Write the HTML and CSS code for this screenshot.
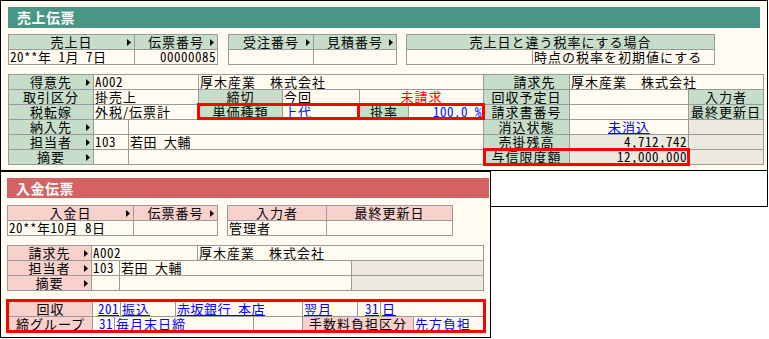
FILE: index.html
```html
<!DOCTYPE html>
<html lang="ja">
<head>
  <meta charset="UTF-8" />
  <title>売上伝票 / 入金伝票</title>
  <link rel="stylesheet" href="styles.css">
</head>
<body>
  <div class="sheet">
    <div class="sales-frame">
      <section class="slip sales">
        <h1 class="slip-title">売上伝票</h1>
        <div class="head-row">
          <div class="grid g-date">
            <div class="c lb ar">売上日</div>
            <div class="c lb ar">伝票番号</div>
            <div class="c num">20**年 1月 7日</div>
            <div class="c num r">00000085</div>
          </div>
          <div class="grid g-order">
            <div class="c lb ar">受注番号</div>
            <div class="c lb ar">見積番号</div>
            <div class="c"></div>
            <div class="c"></div>
          </div>
          <div class="grid g-taxrate">
            <div class="c lb s2">売上日と違う税率にする場合</div>
            <div class="c"></div>
            <div class="c">時点の税率を初期値にする</div>
          </div>
        </div>

        <div class="grid g-main">
          <div class="c lb ar">得意先</div>
          <div class="c s2 num">A002</div>
          <div class="c s4">厚木産業　株式会社</div>
          <div class="c lb shift">請求先</div>
          <div class="c s2">厚木産業　株式会社</div>

          <div class="c lb">取引区分</div>
          <div class="c s2">掛売上</div>
          <div class="c lb">締切</div>
          <div class="c">今回</div>
          <div class="c s2 ctr red">未請求</div>
          <div class="c lb">回収予定日</div>
          <div class="c"></div>
          <div class="c lb">入力者</div>

          <div class="c lb">税転嫁</div>
          <div class="c s2">外税/伝票計</div>
          <div class="c lb">単価種類</div>
          <div class="c"><span class="link">上代</span></div>
          <div class="c lb">掛率</div>
          <div class="c r num blue">100.0 %</div>
          <div class="c lb">請求書番号</div>
          <div class="c"></div>
          <div class="c lb">最終更新日</div>

          <div class="c lb ar">納入先</div>
          <div class="c"></div>
          <div class="c s5"></div>
          <div class="c lb">消込状態</div>
          <div class="c ctr"><span class="link">未消込</span></div>
          <div class="c gr"></div>

          <div class="c lb ar">担当者</div>
          <div class="c num">103</div>
          <div class="c s5 num">若田 大輔</div>
          <div class="c lb">売掛残高</div>
          <div class="c gr r num">4,712,742</div>
          <div class="c gr"></div>

          <div class="c lb ar">摘要</div>
          <div class="c"></div>
          <div class="c s5"></div>
          <div class="c lb">与信限度額</div>
          <div class="c gr r num">12,000,000</div>
          <div class="c gr"></div>
        </div>
      </section>
    </div>

    <div class="mark mark-rate"></div>
    <div class="mark mark-credit"></div>

    <section class="slip receipt">
      <h1 class="slip-title">入金伝票</h1>
      <div class="head-row">
        <div class="grid g-rdate">
          <div class="c lb pk ar">入金日</div>
          <div class="c lb pk ar">伝票番号</div>
          <div class="c num">20**年10月 8日</div>
          <div class="c"></div>
        </div>
        <div class="grid g-rby">
          <div class="c lb pk">入力者</div>
          <div class="c lb pk">最終更新日</div>
          <div class="c">管理者</div>
          <div class="c"></div>
        </div>
      </div>

      <div class="grid g-rmain">
        <div class="c lb pk ar">請求先</div>
        <div class="c s2 num">A002</div>
        <div class="c s2">厚木産業　株式会社</div>

        <div class="c lb pk ar">担当者</div>
        <div class="c num">103</div>
        <div class="c s2 num">若田 大輔</div>
        <div class="c gr"></div>

        <div class="c lb pk ar">摘要</div>
        <div class="c"></div>
        <div class="c s2"></div>
        <div class="c gr"></div>
      </div>

      <div class="collect">
        <div class="grid g-collect">
          <div class="c lb pk">回収</div>
          <div class="c s2 r num"><span class="link">201</span></div>
          <div class="c"><span class="link">振込</span></div>
          <div class="c s2 num"><span class="link">赤坂銀行 本店</span></div>
          <div class="c"><span class="link">翌月</span></div>
          <div class="c r num"><span class="link">31</span></div>
          <div class="c s2"><span class="link">日</span></div>

          <div class="c lb pk">締グループ</div>
          <div class="c r num"><span class="link">31</span></div>
          <div class="c s3"><span class="link">毎月末日締</span></div>
          <div class="c"></div>
          <div class="c lb pk s3">手数料負担区分</div>
          <div class="c"><span class="link">先方負担</span></div>
        </div>
      </div>
    </section>
  </div>
</body>
</html>
```

FILE: styles.css
```css
* {
  margin: 0;
  padding: 0;
  box-sizing: border-box;
}

body {
  background: #fff;
  color: #000;
  font-family: "Noto Sans CJK JP", sans-serif;
  font-size: 13px;
  line-height: 14px;
  letter-spacing: 1px;
}

.sheet {
  position: relative;
  width: 769px;
  height: 339px;
}

.sales-frame {
  width: 768px;
  height: 207px;
  border: 1px solid #000;
  background: #fff;
}

.slip {
  background: #fffbf0;
}

.sales {
  height: 170px;
  border-bottom: 1px solid #000;
  padding-left: 7px;
  padding-top: 6px;
}

.receipt {
  position: absolute;
  left: 0;
  top: 171px;
  width: 491px;
  height: 167px;
  border: 1px solid #000;
  padding-left: 6px;
  padding-top: 6px;
}

.slip-title {
  height: 21px;
  width: 752px;
  padding-left: 9px;
  background: #4a9684;
  color: #fff;
  font-size: 14px;
  font-weight: bold;
  line-height: 21px;
  letter-spacing: 0.5px;
}

.receipt .slip-title {
  width: 482px;
  height: 20px;
  line-height: 20px;
  background: #d46262;
}

/* grids: gray gaps act as the cell rules */
.grid {
  display: grid;
  width: max-content;
  gap: 1px;
  padding: 1px;
  background: #9a9a9a;
  grid-auto-rows: 14px;
}

.head-row {
  display: flex;
  align-items: flex-start;
  margin-top: 6px;
}

.receipt .head-row {
  margin-top: 7px;
  gap: 9px;
}

.g-date { grid-template-columns: 125px 82px; }
.g-order { grid-template-columns: 84px 82px; margin-left: 10px; }
.g-taxrate { grid-template-columns: 125px 181px; margin-left: 9px; }

.g-main {
  margin-top: 9px;
  grid-template-columns: 84px 34px 69px 83px 76px 48px 74px 85px 118px 74px;
}

.g-rdate { grid-template-columns: 125px 83px; }
.g-rby { grid-template-columns: 98px 125px; }

.g-rmain {
  margin-top: 9px;
  grid-template-columns: 83px 27px 77px 153px 131px;
}

.collect {
  margin-top: 8px;
  margin-left: -1px;
  width: 480px;
  border: 3px solid #f00;
}

.g-collect {
  padding: 0;
  grid-template-columns: 83px 21px 5px 54px 77px 48px 54px 22px 32px 69px;
  grid-template-rows: 14px 13px;
}

/* cells */
.c {
  background: #fffbf0;
  padding: 0 1px;
  white-space: pre;
  overflow: hidden;
}

.lb {
  position: relative;
  background: #c6ddc9;
  text-align: center;
}

.lb.pk { background: #f8d0cc; }

.ar::after {
  content: "";
  position: absolute;
  right: 3px;
  top: 4px;
  width: 4px;
  height: 7px;
  background: #000;
  clip-path: polygon(0 0, 100% 50%, 0 100%);
}

.shift { padding-left: 17px; }

.gr { background: #ece9df; }
.r { text-align: right; }
.ctr { text-align: center; }
.red { color: #f00; }
.blue { color: #00f; }

.link {
  color: #00f;
  text-decoration: underline;
  text-underline-offset: 1px;
}

.num {
  font-feature-settings: "hwid";
  letter-spacing: 0.5px;
}

.s2 { grid-column: span 2; }
.s3 { grid-column: span 3; }
.s4 { grid-column: span 4; }
.s5 { grid-column: span 5; }

/* red highlight boxes drawn over the form */
.mark {
  position: absolute;
  border: 3px solid #f00;
}

.mark-rate {
  left: 197px;
  top: 103px;
  width: 288px;
  height: 17px;
}

.mark-rate::after {
  content: "";
  position: absolute;
  left: 157px;
  top: 0;
  bottom: 0;
  width: 3px;
  background: #f00;
}

.mark-credit {
  left: 483px;
  top: 148px;
  width: 207px;
  height: 18px;
}
```
